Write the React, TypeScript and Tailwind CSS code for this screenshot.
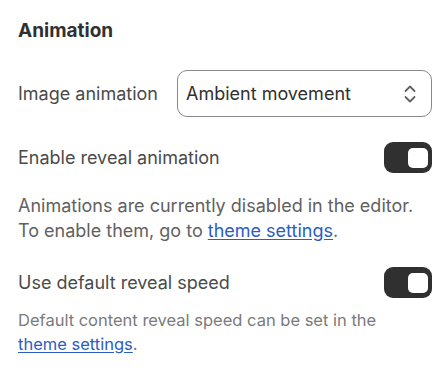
import React, { useState } from 'react';

const Toggle = ({ on, onChange }: { on: boolean; onChange: () => void }) => (
  <button
    onClick={onChange}
    className={`flex h-[31px] w-[48px] shrink-0 items-center rounded-[9px] px-[4px] ${on ? 'justify-end bg-[#303030]' : 'justify-start bg-[#b5b5b5]'}`}
  >
    <span className="h-[20px] w-[20px] rounded-[5px] bg-white" />
  </button>
);

const Link = ({ children }: { children: React.ReactNode }) => (
  <a href="#" className="text-[#2c5cc5] underline underline-offset-2">
    {children}
  </a>
);

const App = () => {
  const [reveal, setReveal] = useState(true);
  const [defaultSpeed, setDefaultSpeed] = useState(true);

  return (
    <div className="h-[374px] w-[448px] bg-white pl-[18px] pr-[16px] pt-[18px] font-['Inter',sans-serif] text-[#4a4a4a]">
      <h2 className="text-[19px] font-bold leading-[26px] text-[#303030]">Animation</h2>

      <div className="mt-[26px] flex items-center justify-between">
        <span className="text-[18px]">Image animation</span>
        <button className="flex h-[47px] w-[255px] items-center justify-between rounded-[10px] border border-[#8a8a8a] pl-[8px] pr-[14px] text-[18px] text-[#303030]">
          Ambient movement
          <svg width="14" height="22" viewBox="0 0 14 22" fill="none" stroke="#616161" strokeWidth="1.8" strokeLinecap="round" strokeLinejoin="round">
            <path d="M2.5 8 7 3.5 11.5 8" />
            <path d="M2.5 14 7 18.5 11.5 14" />
          </svg>
        </button>
      </div>

      <div className="mt-[25px] flex items-center justify-between">
        <span className="text-[18px]">Enable reveal animation</span>
        <Toggle on={reveal} onChange={() => setReveal(!reveal)} />
      </div>

      <p className="mt-[20px] text-[18px] leading-[25px] text-[#616161]">
        Animations are currently disabled in the editor.
        <br />
        To enable them, go to <Link>theme settings</Link>.
      </p>

      <div className="mt-[24px] flex items-center justify-between">
        <span className="text-[18px]">Use default reveal speed</span>
        <Toggle on={defaultSpeed} onChange={() => setDefaultSpeed(!defaultSpeed)} />
      </div>

      <p className="mt-[10px] text-[16.5px] leading-[24px] text-[#7a7a7a]">
        Default content reveal speed can be set in the
        <br />
        <Link>theme settings</Link>.
      </p>
    </div>
  );
};

export default App;
